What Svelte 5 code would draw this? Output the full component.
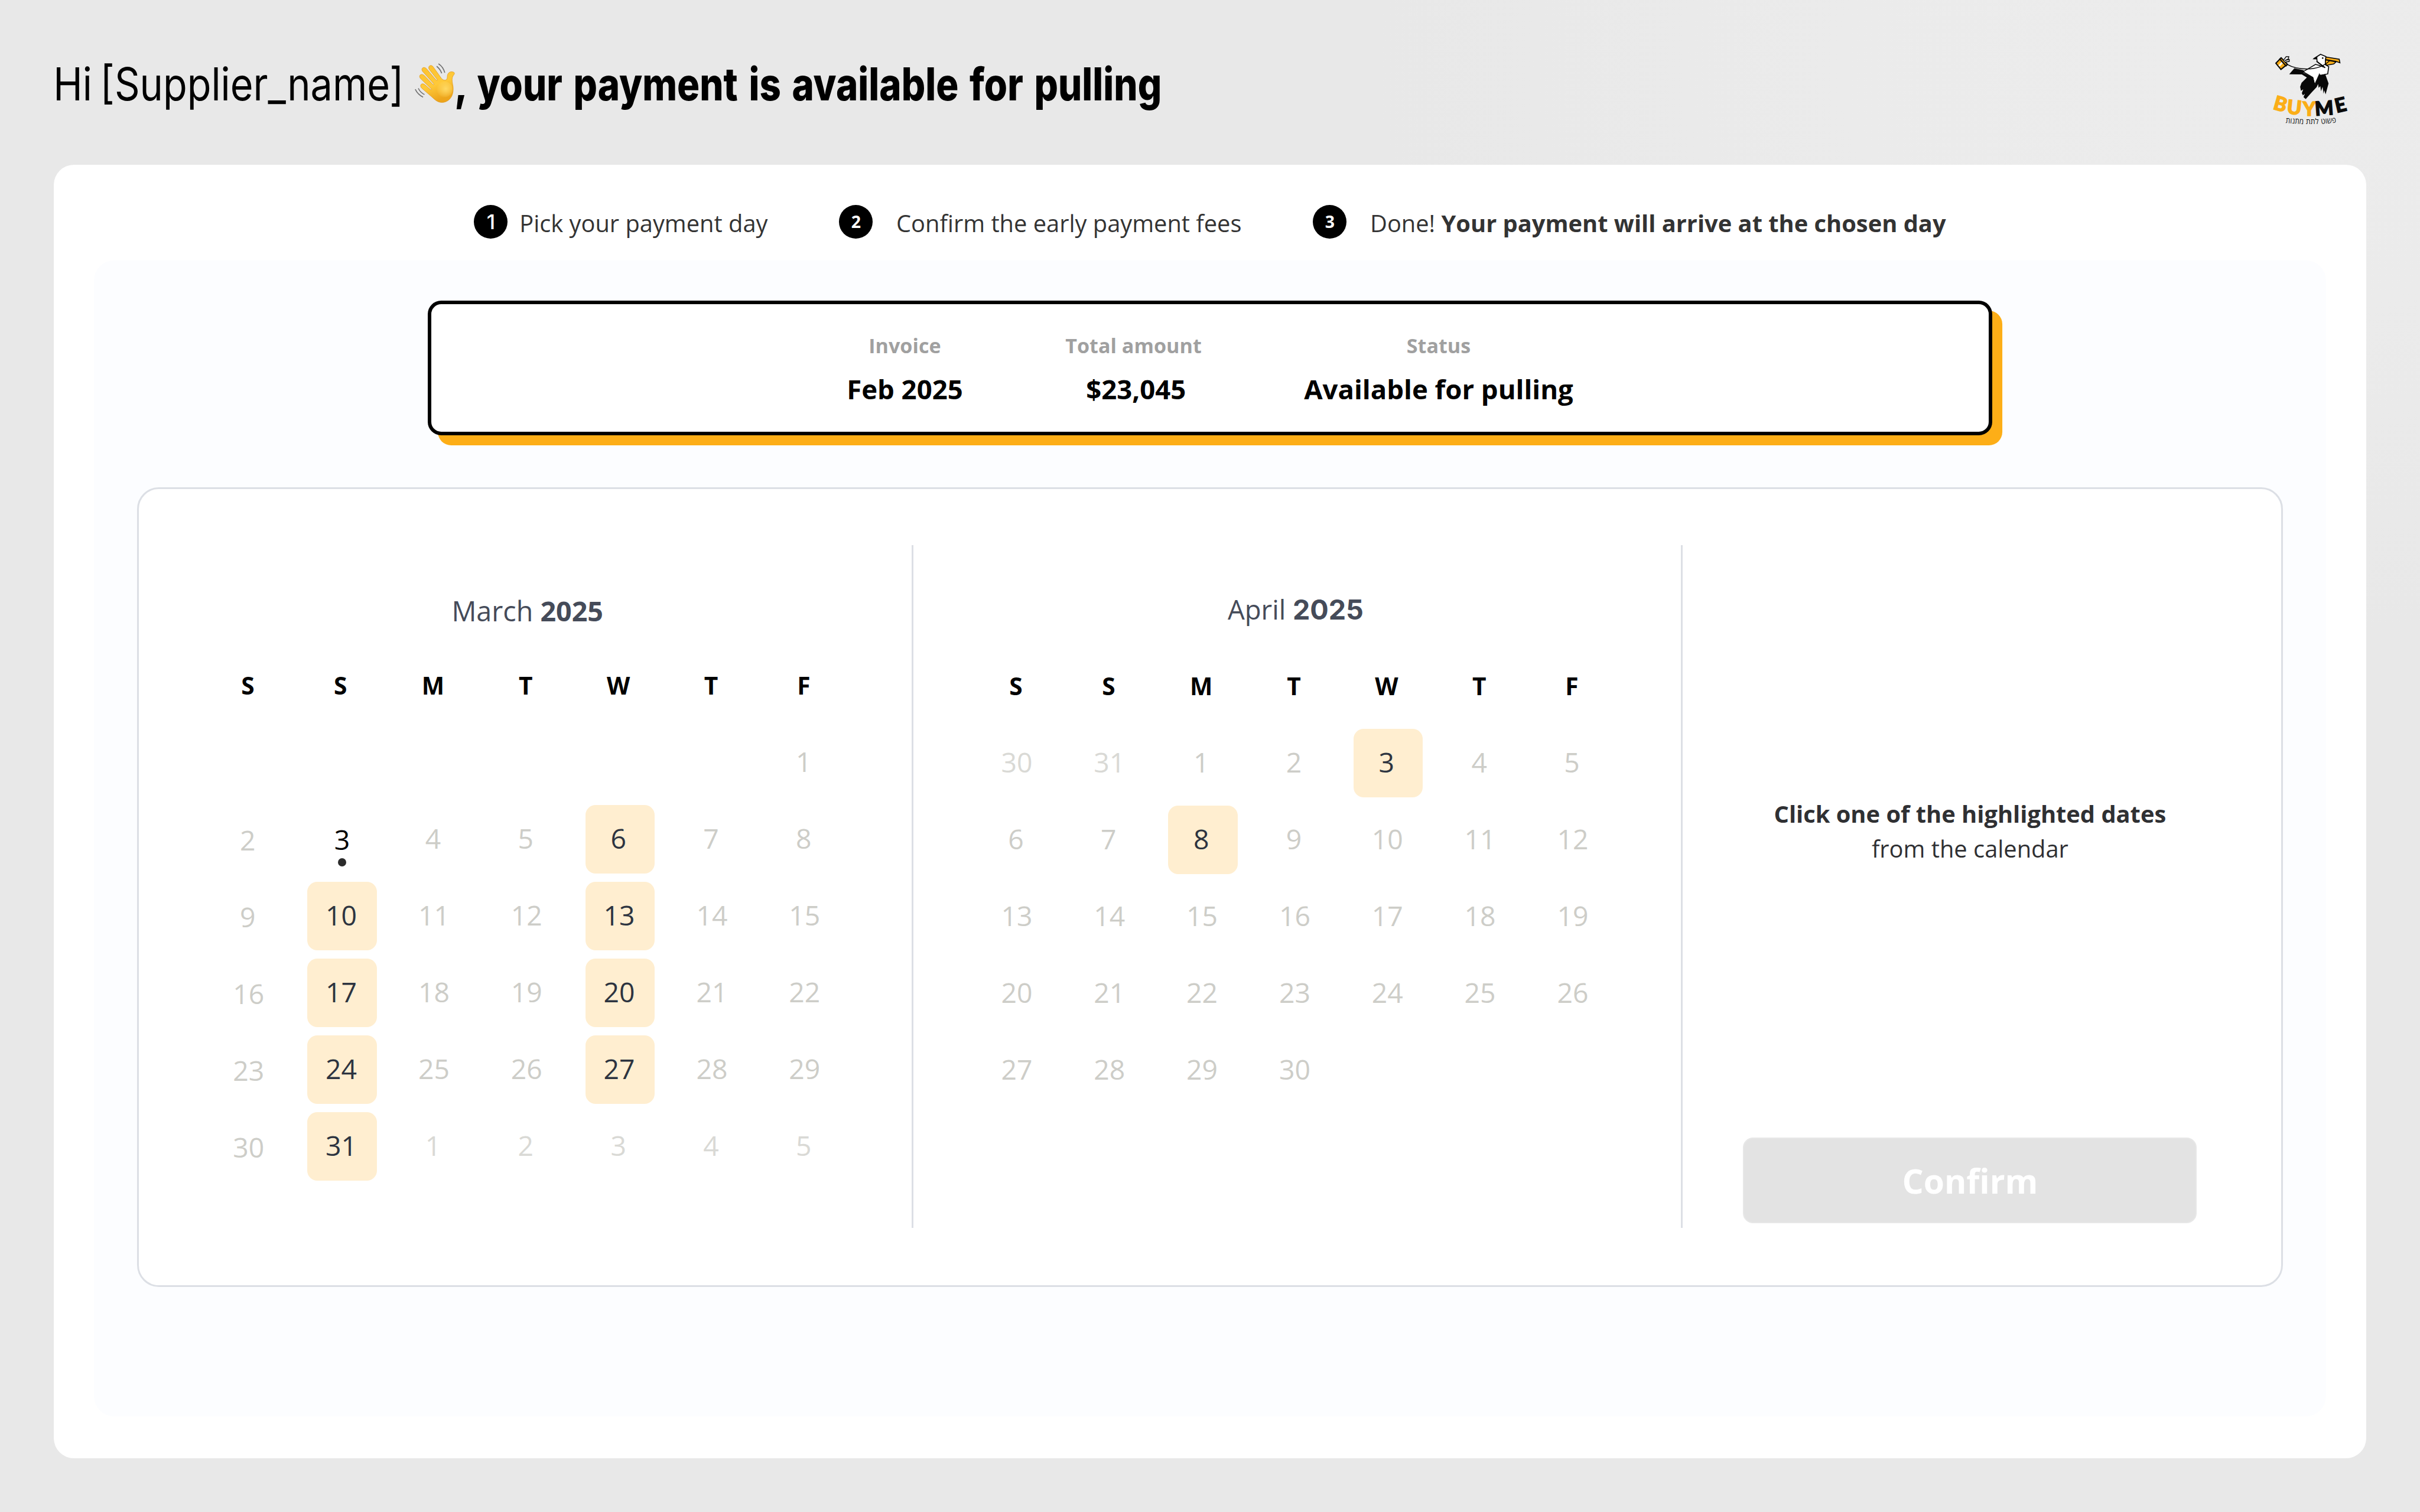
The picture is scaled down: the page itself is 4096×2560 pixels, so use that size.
<script>
  const weekdays = ['S', 'S', 'M', 'T', 'W', 'T', 'F'];

  // Builds a flat list of day cells; `open` lists the days that can be picked.
  function build({ before = [], blanks = 0, days, after = [], open, today }) {
    const cells = [];
    for (let i = 0; i < blanks; i++) cells.push({ label: '', kind: 'blank' });
    for (const d of before) cells.push({ label: d, kind: 'outside' });
    for (let d = 1; d <= days; d++) {
      const kind = d === today ? 'today' : open.includes(d) ? 'open' : 'muted';
      cells.push({ label: d, kind });
    }
    for (const d of after) cells.push({ label: d, kind: 'outside' });
    return cells;
  }

  const months = [
    {
      id: 'march',
      name: 'March',
      year: 2025,
      cells: build({ blanks: 6, days: 31, after: [1, 2, 3, 4, 5], open: [6, 10, 13, 17, 20, 24, 27, 31], today: 3 })
    },
    {
      id: 'april',
      name: 'April',
      year: 2025,
      cells: build({ before: [30, 31], days: 30, open: [3, 8], today: 0 })
    }
  ];

  const summary = [
    { label: 'Invoice', value: 'Feb 2025' },
    { label: 'Total amount', value: '$23,045' },
    { label: 'Status', value: 'Available for pulling' }
  ];

  const titleRuns = [
    { text: 'Hi [Supplier_name]', x: 31.7, w: 208.6, bold: false },
    { text: ', your payment is available for pulling', x: 270.4, w: 420.9, bold: true }
  ];
</script>

<div class="page">
  <header>
    <h1>
      <svg class="title" viewBox="32 30 680 40">
        {#each titleRuns as run}
          <text
            x={run.x}
            y="60"
            class:bold={run.bold}
            textLength={run.w}
            lengthAdjust="spacingAndGlyphs">{run.text}</text>
        {/each}
        <g transform="translate(243.75 35) scale(.083333)">
          <defs>
            <linearGradient id="skin" x1="0" y1="0" x2=".35" y2="1">
              <stop offset="0" stop-color="#fdc22f" />
              <stop offset=".6" stop-color="#fec93a" />
              <stop offset="1" stop-color="#eda51c" />
            </linearGradient>
            <radialGradient id="palm" cx="258" cy="215" r="70" gradientUnits="userSpaceOnUse">
              <stop offset="0" stop-color="#ffd964" />
              <stop offset="1" stop-color="#ffd964" stop-opacity="0" />
            </radialGradient>
          </defs>
          <path
            fill="url(#skin)"
            stroke="#dd9412"
            stroke-width="3"
            stroke-linejoin="round"
            d="M139 76C131 60 141 48 153 49C162 50 167 57 172 64L226 140C235 151 246 156 256 154C266 151 269 141 269 128C269 108 282 94 299 94C313 94 321 99 320 107C319 115 309 121 305 135C300 153 306 176 310 200C314 235 306 272 282 293C258 315 221 320 194 303C180 295 166 280 152 268L86 211C76 201 76 188 85 182C94 177 102 181 111 188L150 222C155 225 158 221 155 217L78 143C69 133 69 121 78 115C88 109 98 115 106 122L165 184C171 190 176 186 172 180L93 92C85 81 86 70 95 65C105 60 115 66 122 74L187 151C193 158 200 155 196 149Z"
          />
          <circle cx="250" cy="220" r="56" fill="url(#palm)" />
          <g fill="none" stroke="#727272" stroke-width="7">
            <path d="M206 37Q240 59 251 101" />
            <path d="M193 55Q218 74 229 105" />
            <path d="M40 219Q59 258 96 275" />
            <path d="M62 212Q76 243 106 256" />
          </g>
        </g>
      </svg>
    </h1>

    <svg class="logo" viewBox="0 0 900 690">
      <g stroke="#080808" stroke-width="9" stroke-linejoin="miter">
        <path fill="#fbae17" d="M238 145L203 182L239 226L278 194Z" />
        <path fill="#fff" stroke="none" d="M250 165L221 197L230 206L258 176Z" />
        <path fill="#fbae17" d="M231 152L241 143L285 190L275 200Z" />
        <path fill="#fff" stroke-width="6" d="M259 158L276 135H295L291 151L266 163L298 154V169L270 173" />
        <path fill="#080808" stroke="none" d="M298 260L335 217L402 232L398 250L470 285L480 335L518 250L556 262L579 326L558 404L548 374L543 400L536 350L525 382L520 345L508 358L504 330L494 352L460 388L416 438L400 424L410 400L396 411L388 396L398 368L382 379L376 350L386 322L424 284L388 262Z" />
        <path fill="#fff" d="M402 240L486 190L512 197L552 212L497 170L495 143L472 150L522 118L560 134L556 192L580 206L573 258L520 268L516 250L480 330L468 284L398 244Z" stroke-width="7" />
        <path fill="#fff" stroke="none" d="M408 240L486 196L540 214L572 214L568 254L518 264L514 252L481 325L470 280Z" />
        <path fill="none" stroke-width="8" d="M493 168L555 214" />
        <path fill="#080808" stroke="none" d="M464 153L500 130L496 154Z" />
        <path fill="#fbae17" stroke-width="7" d="M557 158L632 172L616 187L566 196L556 184Z" />
        <path fill="#fbae17" stroke-width="7" d="M560 137L655 153L660 178L630 168L558 155Z" />
        <path fill="none" stroke-width="6" d="M280 188C350 228 500 248 588 162" />
      </g>
      <circle cx="537" cy="145" r="5.5" fill="#080808" />
      <g class="brand">
        <text x="0" y="0" transform="translate(177 507) rotate(16)">B</text>
        <text x="0" y="0" transform="translate(277 541) rotate(6)">U</text>
        <text x="0" y="0" transform="translate(394 556)">Y</text>
        <g class="dark">
          <text x="0" y="0" transform="translate(484 557) rotate(-4)">M</text>
          <text x="0" y="0" transform="translate(636 537) rotate(-13)">E</text>
        </g>
      </g>
      <g class="tagline">
        <text transform="translate(336 613) rotate(4)" textLength="128" lengthAdjust="spacingAndGlyphs">מתנות</text>
        <text transform="translate(463 617)" textLength="90" lengthAdjust="spacingAndGlyphs">לתת</text>
        <text transform="translate(580 611) rotate(-5)" textLength="108" lengthAdjust="spacingAndGlyphs">פשוט</text>
      </g>
    </svg>
  </header>

  <main>
    <ol class="steps">
      <li class="first"><span class="num">1</span><span>Pick your payment day</span></li>
      <li><span class="num">2</span><span>Confirm the early payment fees</span></li>
      <li><span class="num">3</span><span>Done! <b>Your payment will arrive at the chosen day</b></span></li>
    </ol>

    <section class="panel">
      <div class="summary">
        {#each summary as item}
          <div class="fact">
            <span class="label">{item.label}</span>
            <span class="value">{item.value}</span>
          </div>
        {/each}
      </div>

      <div class="planner">
        {#each months as month}
          <div class="month {month.id}">
            <h2>{month.name} <b>{month.year}</b></h2>
            <div class="weekdays">
              {#each weekdays as day}<span>{day}</span>{/each}
            </div>
            <div class="days">
              {#each month.cells as cell}
                <div class="cell">
                  <span class="day {cell.kind}" class:double={cell.label > 9}>{cell.label}</span>
                </div>
              {/each}
            </div>
          </div>
          <div class="divider"></div>
        {/each}

        <aside>
          <p><b>Click one of the highlighted dates</b><br />from the calendar</p>
          <button>Confirm</button>
        </aside>
      </div>
    </section>
  </main>
</div>

<style>
  /* 1rem equals ten units of a 1440-unit wide layout */
  :global(html) {
    font-size: calc(100vw / 144);
  }
  :global(body) {
    margin: 0;
    overflow: hidden;
  }
  .page {
    box-sizing: border-box;
    width: 144rem;
    height: 90rem;
    padding: 0 3.2rem;
    background: radial-gradient(ellipse 50rem 34rem at 132rem 4rem, #ececec, #ebebeb 45%, #e8e8e8 100%);
    font-family: 'Open Sans', 'Noto Sans', sans-serif;
    color: #333;
  }
  header {
    display: flex;
    justify-content: space-between;
    align-items: flex-start;
    height: 9.8rem;
  }
  h1 {
    margin: 3rem 0 0;
    height: 4rem;
    font-size: 2.7rem;
  }
  .title {
    display: block;
    width: 68rem;
    height: 4rem;
    overflow: visible;
  }
  .title text {
    font-family: Inter, sans-serif;
    font-size: 27px;
    font-weight: 400;
    word-spacing: -2px;
    fill: #000;
  }
  .title .bold {
    font-weight: 800;
    word-spacing: 2px;
  }
  .logo {
    width: 7.5rem;
    height: 5.75rem;
    margin: 2.25rem -0.45rem 0 0;
  }
  .brand text {
    font-family: Lato, sans-serif;
    font-size: 140px;
    font-weight: 900;
    fill: #fbae17;
    stroke: #fbae17;
    stroke-width: 6px;
  }
  .brand .dark text {
    fill: #0b0b0b;
    stroke: #0b0b0b;
  }
  .tagline text {
    font-family: 'Open Sans', 'Noto Sans', 'DejaVu Sans', sans-serif;
    font-size: 56px;
    fill: #111;
    text-anchor: middle;
  }

  main {
    box-sizing: border-box;
    height: 77rem;
    padding: 2.4rem 2.4rem 2.5rem;
    background: #fff;
    border-radius: 1.2rem;
  }
  .steps {
    display: flex;
    justify-content: center;
    gap: 4.25rem;
    height: 2rem;
    margin: 0;
    padding: 0;
    list-style: none;
    font-size: 1.4rem;
    line-height: 2.16rem;
    white-space: nowrap;
  }
  .steps li {
    display: flex;
    gap: 1.4rem;
  }
  .steps .first {
    gap: 0.7rem;
  }
  .num {
    width: 2rem;
    height: 2rem;
    border-radius: 50%;
    background: #000;
    color: #fff;
    font-size: 1rem;
    font-weight: 700;
    line-height: 1.98rem;
    text-align: center;
  }
  .first .num {
    font-family: Inter, sans-serif;
    font-size: 1.22rem;
    font-weight: 500;
  }

  .panel {
    box-sizing: border-box;
    height: 68.8rem;
    margin-top: 1.3rem;
    padding-top: 2.4rem;
    border-radius: 1.2rem;
    background: #fcfdff;
  }
  .summary {
    box-sizing: border-box;
    display: flex;
    justify-content: center;
    gap: 6.1rem;
    width: 93.1rem;
    height: 8rem;
    margin: 0 auto;
    padding-top: 1.6rem;
    border: 0.22rem solid #000;
    border-radius: 0.8rem;
    background: #fff;
    box-shadow: 0.6rem 0.6rem 0 #fdae17;
  }
  .fact {
    display: flex;
    flex-direction: column;
    align-items: center;
    gap: 0.65rem;
    font-weight: 700;
    white-space: nowrap;
  }
  .label {
    font-size: 1.2rem;
    line-height: 1.7rem;
    color: #a0a0a0;
  }
  .value {
    font-size: 1.6rem;
    line-height: 2.2rem;
    color: #000;
  }
  .fact:nth-child(2) .value {
    padding-left: 0.3rem;
  }

  .planner {
    box-sizing: border-box;
    display: flex;
    width: 127.7rem;
    height: 47.6rem;
    margin: 3.1rem auto 0;
    padding: 3.34rem 0 3.3rem;
    border: 0.11rem solid #dcdfe5;
    border-radius: 1.3rem;
    background: #fff;
  }
  .month {
    box-sizing: border-box;
    padding-top: 2.82rem;
  }
  .march {
    width: 45.98rem;
    padding-left: 3.83rem;
  }
  .april {
    width: 45.66rem;
    padding-left: 3.45rem;
  }
  .divider {
    width: 0.11rem;
    height: 40.65rem;
    background: #dcdfe5;
  }
  h2 {
    width: 38.6rem;
    margin: 0 0 2.37rem;
    font-size: 1.64rem;
    font-weight: 400;
    line-height: 2.2rem;
    text-align: center;
    color: #454b59;
  }
  .april h2 {
    margin: -0.1rem 0 2.47rem;
    font-size: 1.6rem;
  }
  .april h2 b {
    font-family: Inter, sans-serif;
    font-size: 1.64rem;
    font-weight: 650;
  }
  .weekdays,
  .days {
    display: grid;
    grid-template-columns: repeat(7, 5.514rem);
  }
  .weekdays {
    margin-bottom: 1.26rem;
    font-size: 1.43rem;
    font-weight: 700;
    line-height: 2rem;
    text-align: center;
    color: #000;
  }
  .weekdays span {
    padding-right: 0.2rem;
  }
  .days {
    grid-auto-rows: 4.57rem;
  }
  .cell {
    display: flex;
    align-items: center;
    justify-content: center;
  }
  .day {
    box-sizing: border-box;
    position: relative;
    width: 4.12rem;
    height: 4.08rem;
    padding-right: 0.2rem;
    border-radius: 0.6rem;
    font-size: 1.63rem;
    line-height: 4rem;
    text-align: center;
    color: #cdcdc8;
  }
  .double {
    padding-right: 0.1rem;
  }
  .outside {
    color: #d9d9d5;
  }
  .open {
    background: #ffeed0;
    color: #2d3440;
  }
  .today {
    padding-right: 0;
    line-height: 4.08rem;
    color: #000;
  }
  .today::after {
    content: '';
    position: absolute;
    left: 50%;
    top: 3.17rem;
    width: 0.5rem;
    height: 0.5rem;
    margin-left: -0.25rem;
    border-radius: 50%;
    background: #2b2b2b;
  }
  .march .cell:nth-child(7n + 1) .day {
    line-height: 4.2rem;
  }

  aside {
    display: flex;
    flex-direction: column;
    justify-content: space-between;
    width: 27rem;
    margin-left: 3.61rem;
    padding: 14.93rem 0 0.28rem;
    box-sizing: border-box;
    height: 40.65rem;
  }
  p {
    margin: 0;
    font-size: 1.4rem;
    line-height: 2.1rem;
    text-align: center;
    white-space: nowrap;
    color: #2f3033;
  }
  button {
    height: 5.1rem;
    padding: 0;
    border: 0.1rem solid #e7e7e7;
    border-radius: 0.6rem;
    background: #e3e3e3;
    color: #fff;
    font-family: inherit;
    font-size: 2rem;
    font-weight: 700;
  }
</style>
